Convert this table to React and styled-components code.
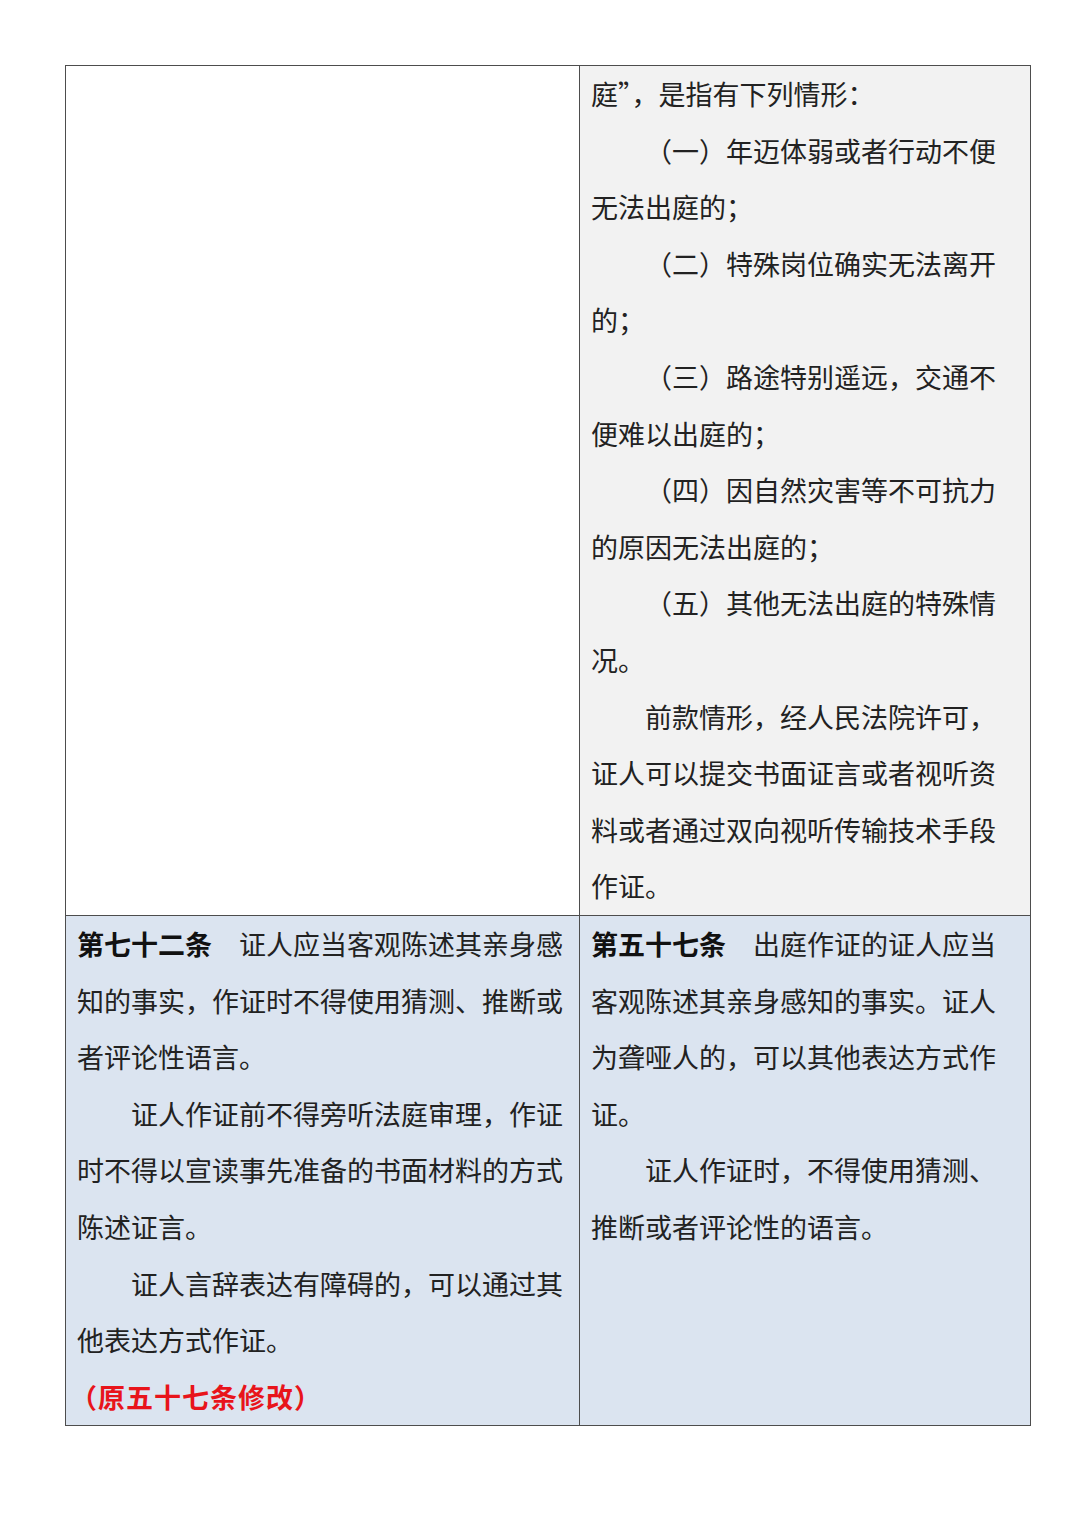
import React from "react";
import styled, { createGlobalStyle } from "styled-components";

const Global = createGlobalStyle`
  html, body { margin: 0; padding: 0; background: #ffffff; }
  body { min-height: 1527px; }
`;

const Page = styled.div`
  width: 1080px;
  min-height: 1527px;
  padding: 65px 0 0 65px;
  box-sizing: border-box;
`;

const Table = styled.div`
  width: 966px;
  box-sizing: border-box;
  border: 1px solid #4d4d4d;
  display: grid;
  grid-template-columns: 513px 1fr;
  font-family: "Noto Sans CJK SC", "Liberation Serif", serif;
  font-size: 27px;
  line-height: 56.6px;
  color: #222;
`;

const Cell = styled.div`
  background: ${(p) => p.$bg};
  padding: 0 11px;
  box-sizing: border-box;
  border-left: ${(p) => (p.$right ? "1px solid #4d4d4d" : "none")};
  border-top: ${(p) => (p.$lower ? "1px solid #4d4d4d" : "none")};
  min-height: ${(p) => (p.$lower ? "510px" : "849px")};
`;

const Line = styled.div`
  white-space: nowrap;
  padding-left: ${(p) => (p.$indent ? "54px" : "0")};
`;

const Strong = styled.span`
  font-weight: 700;
  color: #111;
`;

const Note = styled.div`
  white-space: nowrap;
  color: #e8141b;
  font-weight: 700;
  letter-spacing: 1px;
  margin-left: -7px;
`;

const topRight = [
  ["庭”，是指有下列情形：", false],
  ["（一）年迈体弱或者行动不便", true],
  ["无法出庭的；", false],
  ["（二）特殊岗位确实无法离开", true],
  ["的；", false],
  ["（三）路途特别遥远，交通不", true],
  ["便难以出庭的；", false],
  ["（四）因自然灾害等不可抗力", true],
  ["的原因无法出庭的；", false],
  ["（五）其他无法出庭的特殊情", true],
  ["况。", false],
  ["前款情形，经人民法院许可，", true],
  ["证人可以提交书面证言或者视听资", false],
  ["料或者通过双向视听传输技术手段", false],
  ["作证。", false],
];

const lowLeft = [
  ["知的事实，作证时不得使用猜测、推断或", false],
  ["者评论性语言。", false],
  ["证人作证前不得旁听法庭审理，作证", true],
  ["时不得以宣读事先准备的书面材料的方式", false],
  ["陈述证言。", false],
  ["证人言辞表达有障碍的，可以通过其", true],
  ["他表达方式作证。", false],
];

const lowRight = [
  ["客观陈述其亲身感知的事实。证人", false],
  ["为聋哑人的，可以其他表达方式作", false],
  ["证。", false],
  ["证人作证时，不得使用猜测、", true],
  ["推断或者评论性的语言。", false],
];

const renderLines = (lines) =>
  lines.map(([t, ind], i) => (
    <Line key={i} $indent={ind}>
      {t}
    </Line>
  ));

export default function App() {
  return (
    <>
      <Global />
      <Page>
        <Table>
          <Cell $bg="#ffffff" />
          <Cell $bg="#f2f2f2" $right>
            {renderLines(topRight)}
          </Cell>
          <Cell $bg="#dbe4f0" $lower>
            <Line>
              <Strong>第七十二条</Strong>　证人应当客观陈述其亲身感
            </Line>
            {renderLines(lowLeft)}
            <Note>（原五十七条修改）</Note>
          </Cell>
          <Cell $bg="#dbe4f0" $lower $right>
            <Line>
              <Strong>第五十七条</Strong>　出庭作证的证人应当
            </Line>
            {renderLines(lowRight)}
          </Cell>
        </Table>
      </Page>
    </>
  );
}
